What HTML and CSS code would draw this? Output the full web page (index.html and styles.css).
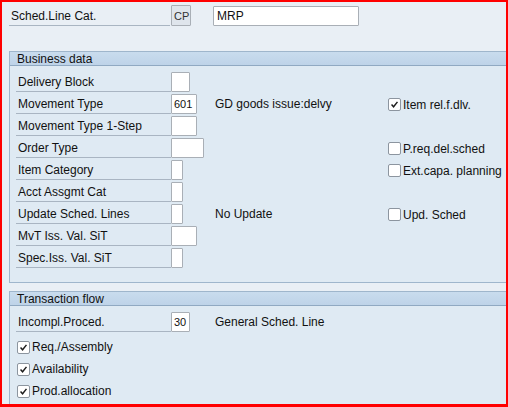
FILE: index.html
```html
<!DOCTYPE html>
<html>
<head>
<meta charset="utf-8">
<link rel="stylesheet" href="styles.css">
</head>
<body>
<div class="frame">
  <div class="toprow">
    <div class="toplabel">Sched.Line Cat.</div>
    <div class="field cp">CP</div>
    <div class="field mrp">MRP</div>
  </div>

  <div class="group g1">
    <div class="ghead">Business data</div>
    <div class="gbody">
      <div class="row"><div class="lbl">Delivery Block</div><div class="bcol"><div class="field w19"></div></div></div>
      <div class="row"><div class="lbl">Movement Type</div><div class="bcol"><div class="field w26">601</div></div><div class="desc">GD goods issue:delvy</div><div class="chk"><span class="cb on"><svg viewBox="0 0 13 13"><path d="M3 6.5 5.4 9.2 10 3.4"/></svg></span>Item rel.f.dlv.</div></div>
      <div class="row"><div class="lbl">Movement Type 1-Step</div><div class="bcol"><div class="field w26"></div></div></div>
      <div class="row"><div class="lbl">Order Type</div><div class="bcol"><div class="field w33"></div></div><div class="desc"></div><div class="chk"><span class="cb"></span>P.req.del.sched</div></div>
      <div class="row"><div class="lbl">Item Category</div><div class="bcol"><div class="field w12"></div></div><div class="desc"></div><div class="chk"><span class="cb"></span>Ext.capa. planning</div></div>
      <div class="row"><div class="lbl">Acct Assgmt Cat</div><div class="bcol"><div class="field w12"></div></div></div>
      <div class="row"><div class="lbl">Update Sched. Lines</div><div class="bcol"><div class="field w12"></div></div><div class="desc">No Update</div><div class="chk"><span class="cb"></span>Upd. Sched</div></div>
      <div class="row"><div class="lbl">MvT Iss. Val. SiT</div><div class="bcol"><div class="field w26"></div></div></div>
      <div class="row"><div class="lbl">Spec.Iss. Val. SiT</div><div class="bcol"><div class="field w12"></div></div></div>
    </div>
  </div>

  <div class="group g2">
    <div class="ghead">Transaction flow</div>
    <div class="gbody">
      <div class="row"><div class="lbl">Incompl.Proced.</div><div class="bcol"><div class="field w19">30</div></div><div class="desc">General Sched. Line</div></div>
      <div class="crow first"><span class="cb on"><svg viewBox="0 0 13 13"><path d="M3 6.5 5.4 9.2 10 3.4"/></svg></span>Req./Assembly</div>
      <div class="crow"><span class="cb on"><svg viewBox="0 0 13 13"><path d="M3 6.5 5.4 9.2 10 3.4"/></svg></span>Availability</div>
      <div class="crow"><span class="cb on"><svg viewBox="0 0 13 13"><path d="M3 6.5 5.4 9.2 10 3.4"/></svg></span>Prod.allocation</div>
    </div>
  </div>
</div>
</body>
</html>
```

FILE: styles.css
```css
html, body {
  margin: 0;
  padding: 0;
}
body {
  font-family: "Liberation Sans", Arial, sans-serif;
  font-size: 12px;
  color: #111;
}
.frame {
  width: 508px;
  height: 407px;
  box-sizing: border-box;
  border: 2px solid #ff0000;
  border-bottom-width: 3px;
  background: #e9eff5;
  overflow: hidden;
}
.toprow {
  display: flex;
  align-items: flex-start;
  height: 21px;
  margin-top: 3px;
  padding-left: 7px;
}
.toplabel {
  width: 161px;
  height: 21px;
  line-height: 22px;
  padding-left: 2px;
  box-sizing: border-box;
  border-bottom: 1px solid #a9b5c2;
}
.field {
  box-sizing: border-box;
  height: 20px;
  background: #fff;
  border: 1px solid #a9afb6;
  border-radius: 1px;
  font-size: 11px;
  line-height: 19px;
  padding-left: 2px;
  white-space: nowrap;
}
.cp {
  width: 20px;
  height: 21px;
  background: #dfe5ec;
  font-size: 11px;
  line-height: 20px;
  padding-left: 2px;
  margin-left: 1px;
  color: #333;
}
.mrp {
  width: 146px;
  margin-left: 22px;
  margin-top: 1px;
  font-size: 12px;
  padding-left: 3px;
}
.group {
  margin-left: 7px;
  margin-right: -20px;
  background: #dfeaf3;
  border: 1px solid #9fb6cc;
}
.g1 {
  margin-top: 25px;
  height: 232px;
  box-sizing: border-box;
}
.g2 {
  margin-top: 8px;
  height: 140px;
  box-sizing: border-box;
}
.ghead {
  height: 13px;
  line-height: 15px;
  padding-left: 7px;
  background: linear-gradient(#c9dcee, #bed3e8);
  border-bottom: 1px solid #90a9c2;
}
.gbody {
  padding: 6px 0 0 6px;
  display: flex;
  flex-direction: column;
  gap: 2px;
}
.row {
  display: flex;
  align-items: flex-start;
  height: 20px;
}
.lbl {
  width: 155px;
  height: 20px;
  box-sizing: border-box;
  line-height: 21px;
  padding-left: 2px;
  border-bottom: 1px solid #a9b5c2;
  white-space: nowrap;
}
.bcol {
  width: 44px;
  display: flex;
}
.w19 { width: 19px; }
.w26 { width: 26px; }
.w33 { width: 33px; }
.w12 { width: 12px; }
.desc {
  width: 173px;
  line-height: 21px;
  white-space: nowrap;
}
.chk {
  display: flex;
  align-items: center;
  height: 21px;
  white-space: nowrap;
}
.cb {
  width: 13px;
  height: 13px;
  box-sizing: border-box;
  border: 1px solid #8c959f;
  border-radius: 2px;
  background: #fff;
  margin-right: 2px;
  display: inline-block;
  flex: none;
}
.cb svg {
  display: block;
  width: 11px;
  height: 11px;
}
.cb svg path {
  fill: none;
  stroke: #1c1c1c;
  stroke-width: 1.7;
}
.crow {
  display: flex;
  align-items: center;
  height: 20px;
  padding-left: 1px;
}
.crow.first {
  margin-top: 3px;
}
```
